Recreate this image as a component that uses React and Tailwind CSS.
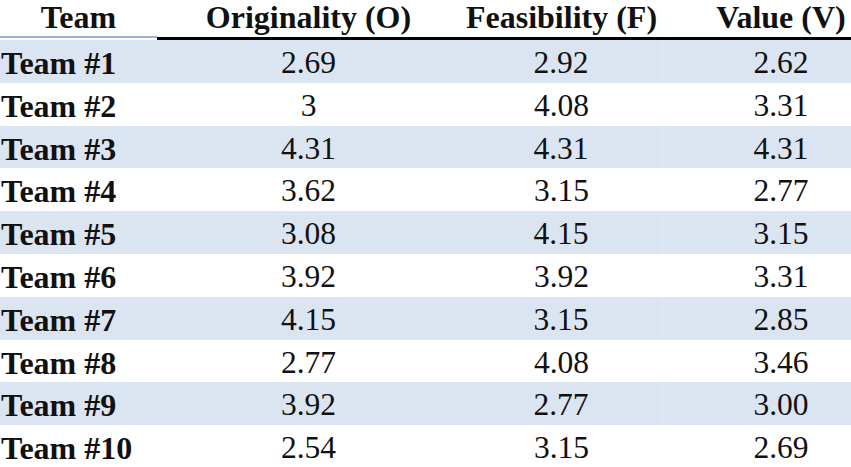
import React from 'react';

const rows = [
  ['Team #1', '2.69', '2.92', '2.62'],
  ['Team #2', '3', '4.08', '3.31'],
  ['Team #3', '4.31', '4.31', '4.31'],
  ['Team #4', '3.62', '3.15', '2.77'],
  ['Team #5', '3.08', '4.15', '3.15'],
  ['Team #6', '3.92', '3.92', '3.31'],
  ['Team #7', '4.15', '3.15', '2.85'],
  ['Team #8', '2.77', '4.08', '3.46'],
  ['Team #9', '3.92', '2.77', '3.00'],
  ['Team #10', '2.54', '3.15', '2.69'],
];

const App = () => {
  return (
    <div className="w-[851px] h-[467px] overflow-hidden bg-white text-[#111] font-['Liberation_Serif','Times_New_Roman',serif] text-[32px]">
      {/* Header */}
      <div className="grid grid-cols-[157px_303px_203px_188px] h-[40px] font-bold">
        <div className="self-start h-[38px] leading-[35px] text-center border-b-2 border-[#95b3d7]">Team</div>
        <div className="leading-[35px] text-center border-b-[3px] border-black">Originality (O)</div>
        <div className="leading-[35px] text-center border-b-[3px] border-black">Feasibility (F)</div>
        <div className="leading-[35px] text-center pl-[48px] border-b-[3px] border-black">Value (V)</div>
      </div>

      {/* Body */}
      {rows.map((r, i) => {
        const shaded = i % 2 === 0;
        return (
          <div
            key={r[0]}
            className={`grid grid-cols-[157px_303px_203px_188px] h-[42.8px] ${shaded ? 'bg-[#dbe5f1]' : 'bg-white'}`}
          >
            <div className="pt-[6px] leading-[34px] font-bold pl-[1px]">{r[0]}</div>
            <div className="pt-[6px] leading-[34px] text-center text-[31.5px]">{r[1]}</div>
            <div className={`pt-[6px] leading-[34px] text-center text-[31.5px] ${shaded ? 'border-r border-[#e3eaf4]' : ''}`}>{r[2]}</div>
            <div className="pt-[6px] leading-[34px] text-center text-[31.5px] pl-[48px]">{r[3]}</div>
          </div>
        );
      })}
    </div>
  );
};

export default App;
